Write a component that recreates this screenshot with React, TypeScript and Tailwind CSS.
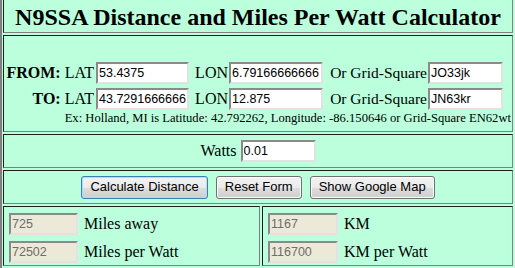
import React from "react";

const cell =
  "border border-t-[#1e1e1e] border-l-[#1e1e1e] border-b-[#808080] border-r-[#808080]";

const field =
  "h-[22px] border-2 border-t-[#8a8a8a] border-l-[#8a8a8a] border-b-[#e2e2e2] border-r-[#e2e2e2] px-[1px] font-['Liberation_Sans',Arial,sans-serif] text-[12.5px] outline-none";

function Field({ value, w, off }: { value: string; w: string; off?: boolean }) {
  return (
    <input
      readOnly
      value={value}
      className={`${field} ${w} ${off ? "bg-[#ece9d8] text-[#6d6d6d]" : "bg-white text-black"}`}
    />
  );
}

function Btn({ children, focus }: { children: React.ReactNode; focus?: boolean }) {
  return (
    <button
      className={`h-[23px] rounded-[3px] border px-[8px] font-['Liberation_Sans',Arial,sans-serif] text-[13px] text-black bg-[linear-gradient(#f2f2f2_0%,#ebebeb_50%,#dddddd_51%,#cfcfcf_100%)] ${
        focus
          ? "border-[#3c7fb1] shadow-[inset_0_0_0_1px_#a8e0fa]"
          : "border-[#707070] shadow-[inset_0_0_0_1px_#fcfcfc]"
      }`}
    >
      {children}
    </button>
  );
}

function CoordRow({
  who,
  lat,
  lon,
  grid,
}: {
  who: string;
  lat: string;
  lon: string;
  grid: string;
}) {
  return (
    <div className="flex h-[26px] items-center">
      <span className="w-[92px] whitespace-pre pr-[2px] text-right">
        <b>{who}</b> LAT
      </span>
      <Field value={lat} w="w-[93px]" />
      <span className="w-[40px] pr-[1px] text-right">LON</span>
      <Field value={lon} w="w-[94px]" />
      <span className="w-[105px] pr-[1px] text-right text-[15.5px]">Or Grid-Square</span>
      <Field value={grid} w="w-[75px]" />
    </div>
  );
}

export default function App() {
  return (
    <div className="h-[268px] w-[515px] overflow-hidden bg-[#bbffdd] font-['Liberation_Serif','Times_New_Roman',serif] text-[16px] text-black">
      <div className="flex h-full flex-col gap-[2px] border-l-2 border-[#808080] pl-[1px] pr-[2px]">
        {/* title */}
        <div className={`${cell} border-t-0 h-[33px] pt-[5px] text-center`}>
          <h1 className="text-[24px] font-bold leading-[24px]">
            N9SSA Distance and Miles Per Watt Calculator
          </h1>
        </div>

        {/* coordinates */}
        <div className={`${cell} flex h-[97px] flex-col pt-[24px]`}>
          <CoordRow who="FROM:" lat="53.4375" lon="6.79166666666" grid="JO33jk" />
          <CoordRow who="TO:" lat="43.7291666666" lon="12.875" grid="JN63kr" />
          <p className="mr-[1px] -mt-[1px] self-end text-[12.6px] leading-[15px]">
            Ex: Holland, MI is Latitude: 42.792262, Longitude: -86.150646 or Grid-Square EN62wt
          </p>
        </div>

        {/* watts */}
        <div className={`${cell} flex h-[34px] items-center justify-center whitespace-pre`}>
          <span>Watts </span>
          <Field value="0.01" w="w-[75px]" />
        </div>

        {/* buttons */}
        <div className={`${cell} flex h-[34px] items-center justify-center gap-[8px]`}>
          <Btn focus>Calculate Distance</Btn>
          <Btn>Reset Form</Btn>
          <Btn>Show Google Map</Btn>
        </div>

        {/* results */}
        <div className="flex h-[60px] gap-[2px]">
          <div className={`${cell} flex w-[257px] flex-col gap-[4px] pl-[5px] pt-[5px]`}>
            <div className="flex items-center gap-[6px]">
              <Field value="725" w="w-[69px]" off />
              <span>Miles away</span>
            </div>
            <div className="flex items-center gap-[6px]">
              <Field value="72502" w="w-[69px]" off />
              <span>Miles per Watt</span>
            </div>
          </div>
          <div className={`${cell} flex flex-1 flex-col gap-[4px] pl-[5px] pt-[5px]`}>
            <div className="flex items-center gap-[6px]">
              <Field value="1167" w="w-[70px]" off />
              <span>KM</span>
            </div>
            <div className="flex items-center gap-[6px]">
              <Field value="116700" w="w-[70px]" off />
              <span>KM per Watt</span>
            </div>
          </div>
        </div>
      </div>
    </div>
  );
}
